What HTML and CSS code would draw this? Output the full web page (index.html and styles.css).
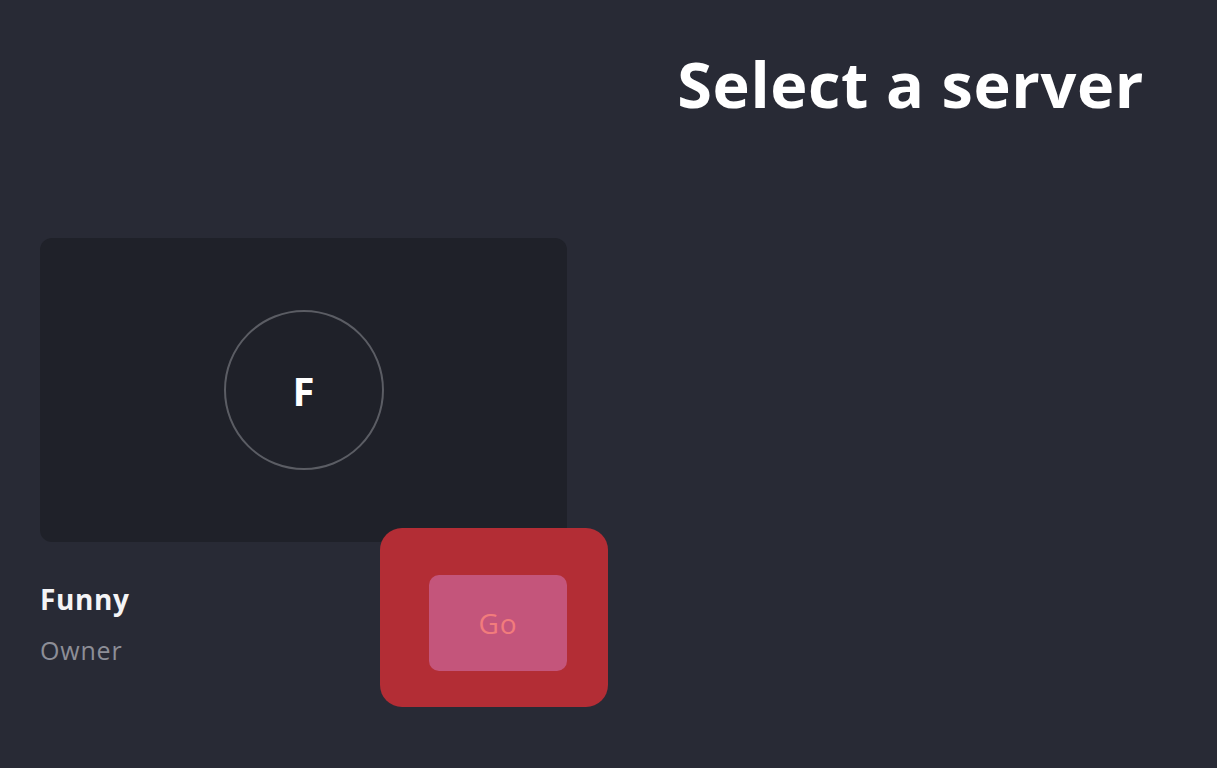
FILE: index.html
```html
<!DOCTYPE html>
<html lang="en">
<head>
    <meta charset="UTF-8">
    <meta name="viewport" content="width=device-width, initial-scale=1.0">
    <title>Select a server</title>
    <link rel="stylesheet" href="styles.css">
</head>
<body>
    <div class="page">
        <header class="header">
            <h1>Select a server</h1>
        </header>

        <div class="servers">
            <div class="server">
                <div class="server-banner">
                    <div class="server-icon">F</div>
                </div>
                <div class="server-footer">
                    <div class="server-info">
                        <div class="server-name">Funny</div>
                        <div class="server-role">Owner</div>
                    </div>
                    <div class="go-wrap">
                        <span class="highlight"></span>
                        <button class="go-btn">Go</button>
                    </div>
                </div>
            </div>
        </div>
    </div>
</body>
</html>
```

FILE: styles.css
```css
body {
    margin: 0;
    padding: 0;
    background: #282a35;
    font-family: 'Open Sans', 'Lato', sans-serif;
    color: #ffffff;
    min-height: 100vh;
}
.page {
    padding: 0 40px;
}
.header {
    display: flex;
    justify-content: flex-end;
    padding-right: 33px;
    padding-top: 42px;
}
h1 {
    margin: 0;
    font-size: 63px;
    font-weight: 700;
    line-height: 84px;
    letter-spacing: 0.6px;
}
.servers {
    display: flex;
    margin-top: 112px;
}
.server {
    width: 527px;
}
.server-banner {
    height: 304px;
    background: #1f2129;
    border-radius: 12px;
    display: flex;
    align-items: center;
    justify-content: center;
}
.server-icon {
    width: 156px;
    height: 156px;
    border: 2px solid #5b5d64;
    border-radius: 50%;
    display: flex;
    align-items: center;
    justify-content: center;
    font-size: 40px;
    font-weight: 700;
}
.server-footer {
    display: flex;
    justify-content: space-between;
    align-items: flex-start;
    margin-top: 33px;
}
.server-info {
    padding-top: 6px;
}
.server-name {
    font-size: 28px;
    font-weight: 700;
    line-height: 36px;
    letter-spacing: 0.6px;
    color: #f4f4f6;
}
.server-role {
    margin-top: 17px;
    font-size: 25px;
    line-height: 32px;
    letter-spacing: 0.8px;
    color: #8d8e97;
}
.go-wrap {
    position: relative;
}
.highlight {
    position: absolute;
    top: -47px;
    right: -41px;
    bottom: -36px;
    left: -49px;
    background: #b32d35;
    border-radius: 22px;
}
.go-btn {
    position: relative;
    display: block;
    width: 138px;
    height: 96px;
    border: none;
    border-radius: 10px;
    background: #c4557b;
    color: #f27c7c;
    font-family: 'Open Sans', sans-serif;
    font-size: 28px;
    letter-spacing: 1px;
    cursor: pointer;
}
```
